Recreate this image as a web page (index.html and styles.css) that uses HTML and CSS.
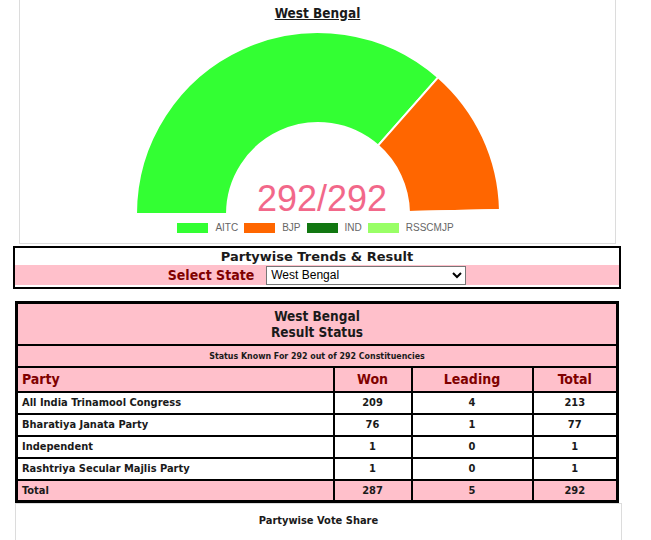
FILE: index.html
```html
<!DOCTYPE html>
<html lang="en">
<head>
    <meta charset="UTF-8">
    <meta name="viewport" content="width=device-width, initial-scale=1.0">
    <title>West Bengal Result</title>
    <link rel="stylesheet" href="styles.css">
</head>
<body>
    <div class="chart-panel">
        <h3 class="chart-title">West Bengal</h3>
        <div class="gauge">
            <svg class="gauge-svg" width="366" height="186" viewBox="0 0 366 186">
                <!-- centre 183,183 ; outer 182 ; inner 91 -->
                <path fill="#33ff33" stroke="#fff" stroke-width="2"
                      d="M1 183 A182 182 0 0 1 303.1 46.3 L243.0 114.6 A91 91 0 0 0 92 183 Z"/>
                <path fill="#ff6600" stroke="#fff" stroke-width="2"
                      d="M303.1 46.3 A182 182 0 0 1 364.96 179.1 L273.98 181.04 A91 91 0 0 0 243.0 114.6 Z"/>
                <path fill="#117711" stroke="#fff" stroke-width="2"
                      d="M364.96 179.1 A182 182 0 0 1 364.99 181.05 L273.99 182.02 A91 91 0 0 0 273.98 181.04 Z"/>
                <path fill="#99ff66" stroke="#fff" stroke-width="2"
                      d="M364.99 181.05 A182 182 0 0 1 365 183 L274 183 A91 91 0 0 0 273.99 182.02 Z"/>
            </svg>
            <div class="gauge-count">292/292</div>
        </div>
        <ul class="legend">
            <li><span class="swatch aitc"></span>AITC</li>
            <li><span class="swatch bjp"></span>BJP</li>
            <li><span class="swatch ind"></span>IND</li>
            <li><span class="swatch rss"></span>RSSCMJP</li>
        </ul>
    </div>

    <div class="trends">
        <div class="trends-title">Partywise Trends &amp; Result</div>
        <div class="trends-select">
            <label for="state">Select State</label>
            <select id="state">
                <option>West Bengal</option>
            </select>
        </div>
    </div>

    <table class="result">
        <tr class="pink">
            <td colspan="4" class="result-head">West Bengal<br>Result Status</td>
        </tr>
        <tr class="pink">
            <td colspan="4" class="status">Status Known For 292 out of 292 Constituencies</td>
        </tr>
        <tr class="pink col-head">
            <th class="party">Party</th>
            <th class="won">Won</th>
            <th class="leading">Leading</th>
            <th class="total">Total</th>
        </tr>
        <tr>
            <td class="party">All India Trinamool Congress</td>
            <td>209</td>
            <td>4</td>
            <td>213</td>
        </tr>
        <tr>
            <td class="party">Bharatiya Janata Party</td>
            <td>76</td>
            <td>1</td>
            <td>77</td>
        </tr>
        <tr>
            <td class="party">Independent</td>
            <td>1</td>
            <td>0</td>
            <td>1</td>
        </tr>
        <tr>
            <td class="party">Rashtriya Secular Majlis Party</td>
            <td>1</td>
            <td>0</td>
            <td>1</td>
        </tr>
        <tr class="pink">
            <td class="party">Total</td>
            <td>287</td>
            <td>5</td>
            <td>292</td>
        </tr>
    </table>

    <div class="share-panel">
        <div class="share-title">Partywise Vote Share</div>
    </div>
</body>
</html>
```

FILE: styles.css
```css
* {
    margin: 0;
    padding: 0;
    box-sizing: border-box;
}

body {
    width: 651px;
    font-family: "DejaVu Sans", Verdana, sans-serif;
    color: #1a1a1a;
    background: #fff;
}

li {
    list-style: none;
}

/* chart panel */
.chart-panel {
    width: 597px;
    margin-left: 19px;
    border: 1px solid #dcdcdc;
    border-top: none;
    height: 244px;
}

.chart-title {
    text-align: center;
    font-size: 13.5px;
    font-weight: bold;
    font-stretch: condensed;
    text-decoration: underline;
    padding-top: 5px;
    height: 31px;
}

.gauge {
    position: relative;
    width: 366px;
    height: 186px;
    margin-left: 115px;
}

.gauge-svg {
    display: block;
}

.gauge-count {
    position: absolute;
    left: 8px;
    right: 0;
    bottom: -3px;
    text-align: center;
    font-family: "Liberation Sans", Arial, sans-serif;
    font-size: 36px;
    color: #f2688a;
}

.legend {
    display: flex;
    justify-content: center;
    gap: 6px;
    margin-top: 4px;
    padding-right: 4px;
    font-family: "Liberation Sans", Arial, sans-serif;
    font-size: 10px;
    color: #666;
}

.legend li {
    display: flex;
    align-items: center;
    gap: 7px;
    line-height: 14px;
}

.swatch {
    display: inline-block;
    width: 31px;
    height: 10px;
}

.aitc { background: #33ff33; }
.bjp { background: #ff6600; }
.ind { background: #117711; }
.rss { background: #99ff66; }

/* trends box */
.trends {
    width: 608px;
    margin: 2px 0 0 13px;
    border: 2px solid #000;
    text-align: center;
}

.trends-title {
    font-size: 13px;
    font-weight: bold;
    line-height: 17px;
}

.trends-select {
    background: #ffc0cb;
    height: 20px;
    display: flex;
    justify-content: center;
    align-items: center;
    gap: 12px;
    margin-bottom: 2px;
}

.trends-select label {
    font-size: 14px;
    font-weight: bold;
    font-stretch: condensed;
    color: #800000;
}

.trends-select select {
    width: 200px;
    height: 19px;
    font-family: "Liberation Sans", Arial, sans-serif;
    font-size: 12px;
    border: 1px solid #767676;
    background: #fff;
    color: #000;
}

/* result table */
.result {
    width: 604px;
    margin: 12px 0 0 15px;
    border-collapse: collapse;
    border: 3px solid #000;
    font-size: 11px;
    font-weight: bold;
    font-stretch: condensed;
}

.result td,
.result th {
    border: 2px solid #000;
    text-align: center;
    height: 22px;
}

.pink {
    background: #ffc0cb;
}

.result .result-head {
    height: 42px;
    font-size: 13.5px;
    line-height: 16px;
}

.result .status {
    font-size: 8.8px;
    height: 22px;
}

.result .col-head th {
    height: 25px;
    font-size: 14px;
    color: #800000;
}

.result .party {
    text-align: left;
    padding-left: 4px;
    width: 317px;
}

.result .won { width: 78px; }
.result .leading { width: 121px; }

/* vote share panel */
.share-panel {
    width: 607px;
    margin: 0 0 0 15px;
    border: 1px solid #dcdcdc;
    border-bottom: none;
    height: 40px;
    text-align: center;
}

.share-title {
    font-size: 11px;
    font-weight: bold;
    font-stretch: condensed;
    padding-top: 10px;
}
```
